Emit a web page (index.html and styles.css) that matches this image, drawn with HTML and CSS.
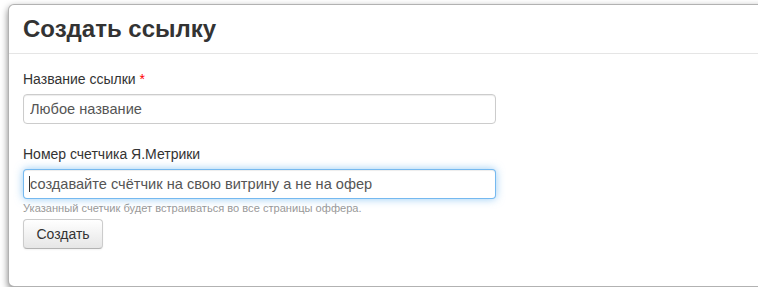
FILE: index.html
```html
<!DOCTYPE html>
<html lang="ru">
<head>
    <meta charset="UTF-8">
    <meta name="viewport" content="width=device-width, initial-scale=1.0">
    <title>Создать ссылку</title>
    <link rel="stylesheet" href="styles.css">
</head>
<body>
    <!-- Modal -->
    <div class="modal">
        <div class="modal-header">
            <h3>Создать ссылку</h3>
        </div>
        <div class="modal-body">
            <form id="link-form">
                <div class="control-group">
                    <label for="linkName">Название ссылки <span class="required">*</span></label>
                    <input type="text" id="linkName" name="linkName" value="Любое название">
                </div>
                <div class="control-group">
                    <label for="counter">Номер счетчика Я.Метрики</label>
                    <div class="input-wrap">
                        <input type="text" id="counter" name="counter" class="focused" value="создавайте счётчик на свою витрину а не на офер">
                        <span class="caret"></span>
                    </div>
                    <p class="help-block">Указанный счетчик будет встраиваться во все страницы оффера.</p>
                </div>
                <button type="submit" class="btn">Создать</button>
            </form>
        </div>
    </div>
</body>
</html>
```

FILE: styles.css
```css
body {
    font-family: "Liberation Sans", Arial, sans-serif;
    font-size: 14px;
    line-height: 20px;
    color: #333;
    background: #fff;
    margin: 0;
    padding: 4px 0 0 8px;
    overflow: hidden;
}

.modal {
    width: 780px;
    background: #fff;
    border: 1px solid rgba(0, 0, 0, 0.3);
    border-radius: 6px;
    box-shadow: 0 3px 7px rgba(0, 0, 0, 0.5);
}

.modal-header {
    padding: 0 14px;
    border-bottom: 1px solid #e5e5e5;
}

.modal-header h3 {
    margin: 0;
    font-size: 24px;
    line-height: 48px;
    font-weight: bold;
    color: #333;
}

.modal-body {
    padding: 15px 14px 37px;
}

form {
    margin: 0;
}

.control-group label {
    display: block;
    margin-bottom: 5px;
}

.required {
    color: #f00;
}

.input-wrap {
    position: relative;
    width: 473px;
}

input[type="text"] {
    display: block;
    box-sizing: border-box;
    width: 473px;
    height: 30px;
    padding: 4px 6px;
    margin-bottom: 20px;
    font-family: inherit;
    font-size: 14.6px;
    line-height: 20px;
    color: #555;
    background: #fff;
    border: 1px solid #ccc;
    border-radius: 4px;
    box-shadow: inset 0 1px 1px rgba(0, 0, 0, 0.075);
    outline: none;
}

input.focused {
    margin-bottom: 0;
    border-color: rgba(82, 168, 236, 0.8);
    box-shadow: inset 0 1px 1px rgba(0, 0, 0, 0.075), 0 0 8px rgba(82, 168, 236, 0.6);
}

/* text cursor in the focused field */
.caret {
    position: absolute;
    left: 6px;
    top: 7px;
    width: 1px;
    height: 16px;
    background: #333;
}

.help-block {
    margin: 2px 0 4px;
    font-size: 11.1px;
    line-height: 14px;
    color: #999;
}

.btn {
    display: inline-block;
    width: 80px;
    padding: 4px 12px;
    font-family: inherit;
    font-size: 14px;
    line-height: 20px;
    color: #333;
    background-color: #f5f5f5;
    background-image: linear-gradient(to bottom, #ffffff, #e6e6e6);
    border: 1px solid #ccc;
    border-bottom-color: #b3b3b3;
    border-radius: 4px;
    box-shadow: inset 0 1px 0 rgba(255, 255, 255, 0.2), 0 1px 2px rgba(0, 0, 0, 0.05);
    cursor: pointer;
}
```
